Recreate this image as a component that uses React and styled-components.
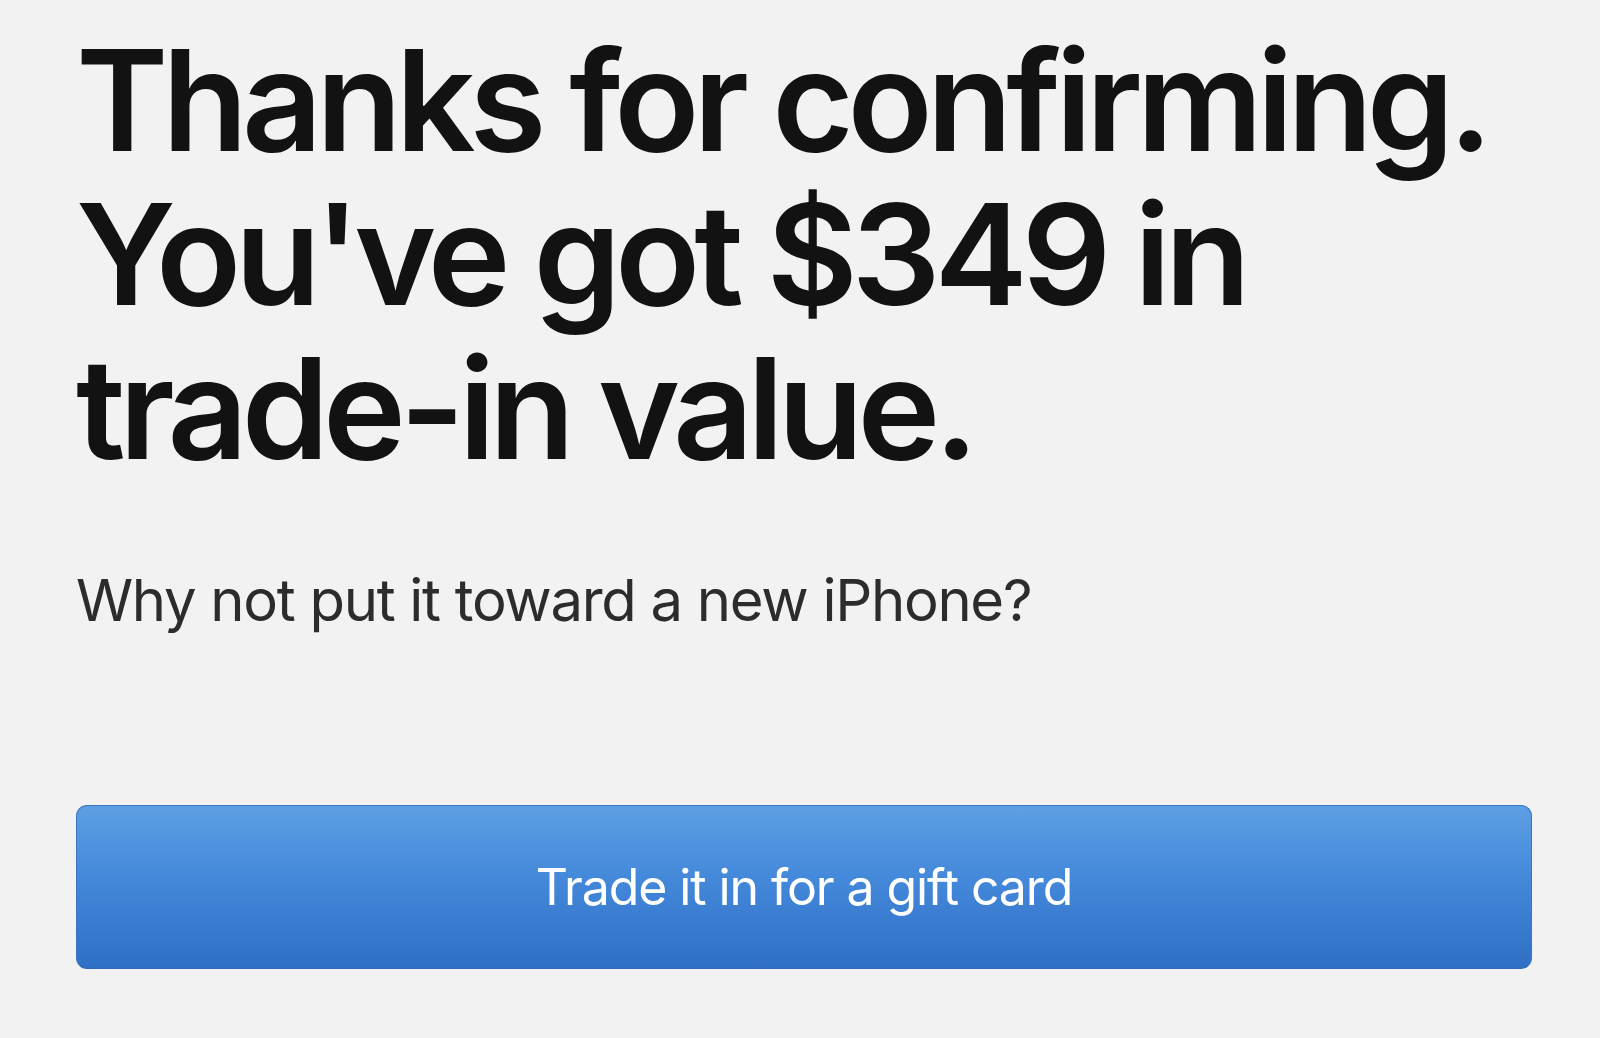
import React from 'react';
import styled, { createGlobalStyle } from 'styled-components';

const GlobalStyle = createGlobalStyle`
    html, body {
        margin: 0;
        padding: 0;
        background: #f2f2f2;
    }
    body {
        font-family: Inter, "Liberation Sans", sans-serif;
        -webkit-font-smoothing: antialiased;
    }
`;

const Page = styled.div`
    width: 1600px;
    height: 1038px;
    box-sizing: border-box;
    padding: 23px 68px 0 76px;
    display: flex;
    flex-direction: column;
    overflow: hidden;
`;

const Headline = styled.h1`
    margin: 0;
    font-size: 140px;
    line-height: 154px;
    font-weight: 600;
    letter-spacing: -6.1px;
    color: #121212;
    white-space: nowrap;
`;

const HeadLine = styled.span`
    display: block;
`;

const SubHeadline = styled.p`
    margin: 80px 0 0;
    font-size: 58px;
    line-height: 70px;
    font-weight: 400;
    letter-spacing: -1.3px;
    color: #2c2c2c;
    white-space: nowrap;
`;

const GiftButton = styled.button`
    margin-top: 170px;
    height: 164px;
    width: 100%;
    flex-shrink: 0;
    border: 1px solid #3a76c2;
    border-bottom-color: #2d68b8;
    border-radius: 11px;
    background: linear-gradient(to bottom, #5c9fe3 0%, #4488da 45%, #2f70c5 100%);
    color: #ffffff;
    font-family: Inter, "Liberation Sans", sans-serif;
    font-size: 50px;
    font-weight: 400;
    letter-spacing: -1.1px;
    cursor: pointer;
`;

export default function App() {
    return (
        <>
            <GlobalStyle />
            <Page>
                <Headline>
                    <HeadLine>Thanks for confirming.</HeadLine>
                    <HeadLine>You've got $349 in</HeadLine>
                    <HeadLine>trade-in value.</HeadLine>
                </Headline>
                <SubHeadline>Why not put it toward a new iPhone?</SubHeadline>
                <GiftButton>Trade it in for a gift card</GiftButton>
            </Page>
        </>
    );
}
